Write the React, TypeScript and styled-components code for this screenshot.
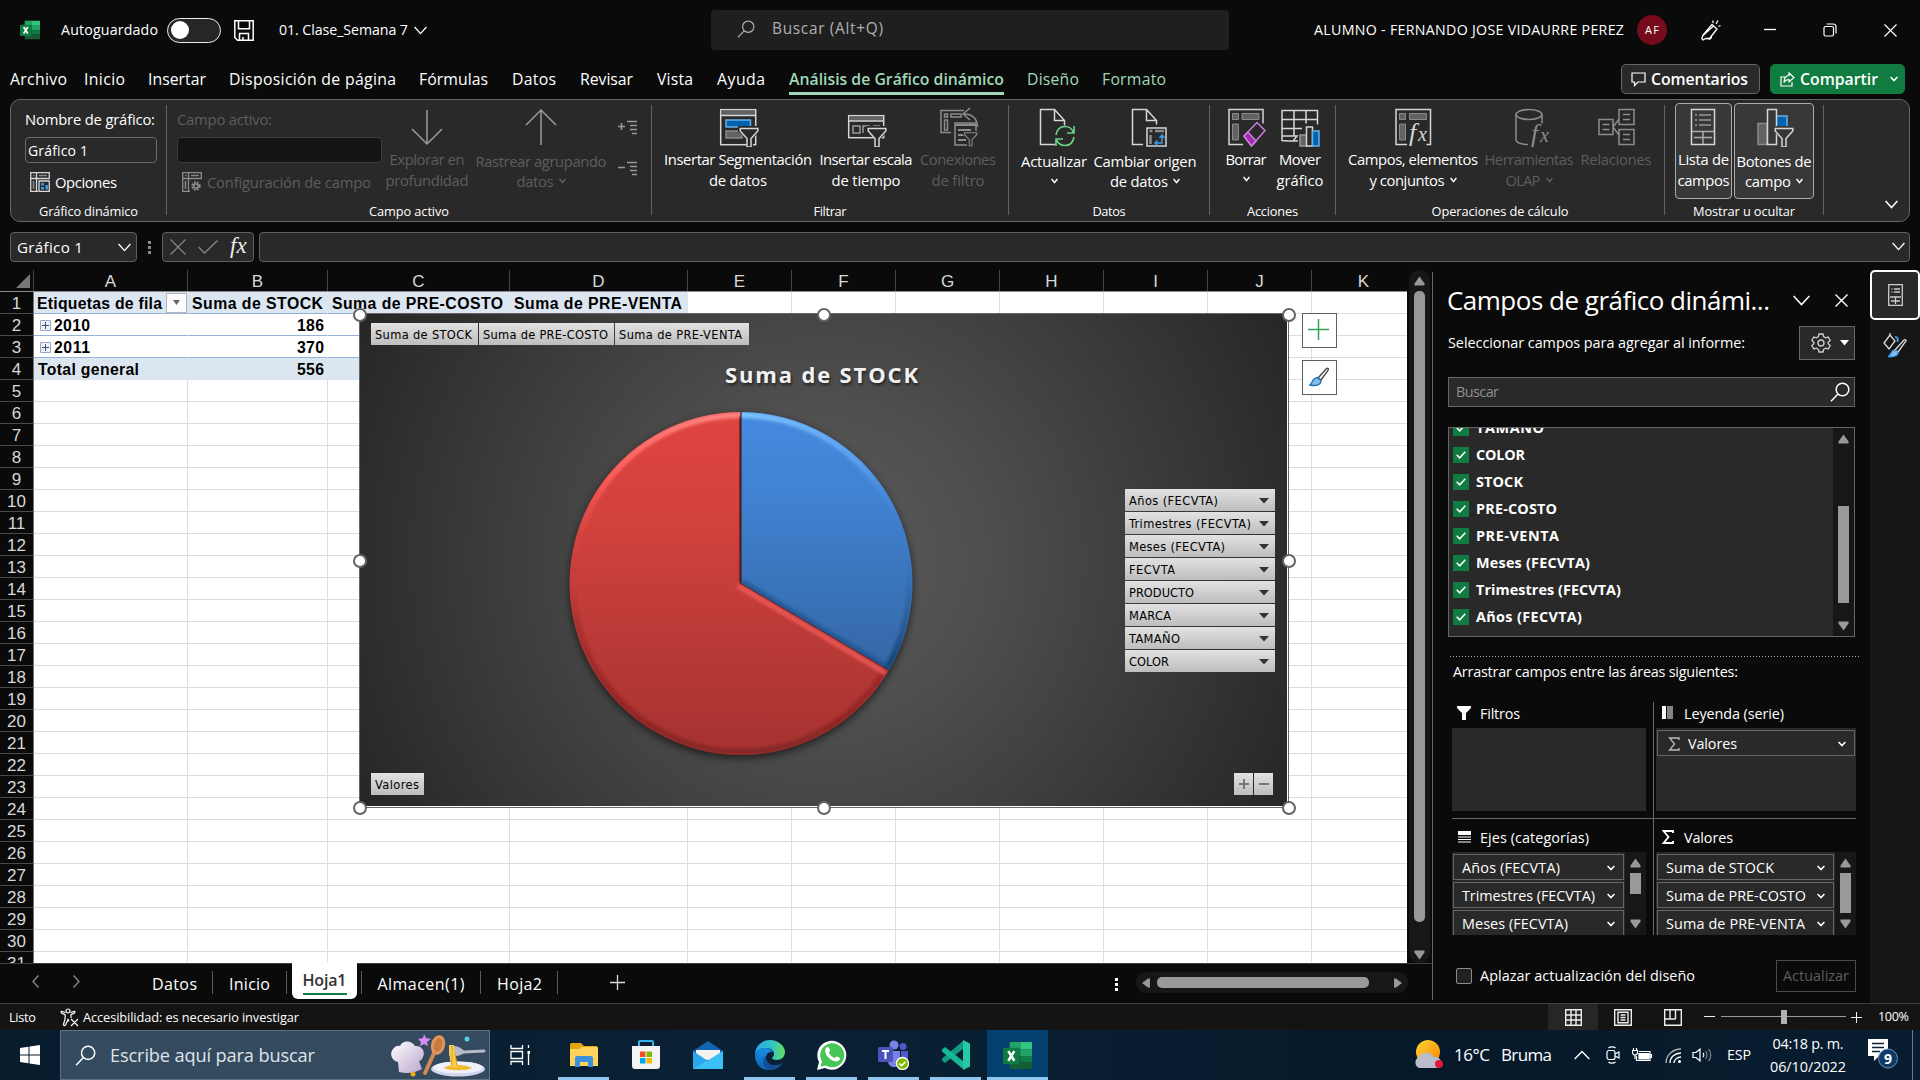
import React, { useLayoutEffect, useRef } from "react";
import styled, { createGlobalStyle, css } from "styled-components";

const UI = `"Open Sans", "Noto Sans", sans-serif`;
const ARIAL = `"Liberation Sans", Arial, sans-serif`;
const TAHOMA = `"DejaVu Sans Condensed", "DejaVu Sans", sans-serif`;

const GlobalStyle = createGlobalStyle`
  * { box-sizing: border-box; }
  html, body { margin: 0; padding: 0; background: #0a0a0a; overflow: hidden; }
  body { font-family: ${UI}; color: #fff; }
  svg { display: block; flex: none; }
`;

/* ---------- text ---------- */

const TextBox = styled.span<{ $w: number; $s: number; $c: string; $b: number; $f: string; $ml: number }>`
  display: block;
  flex: none;
  width: ${(p) => p.$w}px;
  margin-left: ${(p) => p.$ml}px;
  font-family: ${(p) => p.$f};
  font-size: ${(p) => p.$s}px;
  font-weight: ${(p) => p.$b};
  line-height: 20px;
  color: ${(p) => p.$c};
  white-space: nowrap;
`;

type TextProps = { w: number; s?: number; c?: string; b?: number; f?: string; ml?: number; children: string; className?: string };

/* A label whose tracking is adjusted so that the text fills its width. */
function T({ w, s = 15, c = "#fff", b = 400, f = UI, ml = 0, children, className }: TextProps) {
  const ref = useRef<HTMLSpanElement>(null);
  useLayoutEffect(() => {
    const el = ref.current;
    if (!el) return;
    el.style.letterSpacing = "0px";
    const natural = el.getBoundingClientRect().width;
    el.style.letterSpacing = `${(w - natural) / Math.max(1, children.length - 1)}px`;
  }, [w, children]);
  return (
    <TextBox className={className} $w={w} $s={s} $c={c} $b={b} $f={f} $ml={ml}>
      <span ref={ref}>{children}</span>
    </TextBox>
  );
}

const ChevWrap = styled.svg<{ $ml?: number }>`
  margin-left: ${(p) => p.$ml ?? 0}px;
`;

function Chev({ w = 8, h = 4, c = "#fff", sw = 1.5, ml }: { w?: number; h?: number; c?: string; sw?: number; ml?: number }) {
  return (
    <ChevWrap $ml={ml} width={w} height={h + 2} viewBox={`0 0 ${w} ${h + 2}`} fill="none" stroke={c} strokeWidth={sw}>
      <path d={`M0.6 1 L${w / 2} ${h + 0.6} L${w - 0.6} 1`} />
    </ChevWrap>
  );
}

/* ---------- frame ---------- */

const Screen = styled.div`
  width: 1920px;
  height: 1080px;
  display: flex;
  flex-direction: column;
  background: #0a0a0a;
  overflow: hidden;
`;

/* ---------- title bar ---------- */

const TitleBar = styled.div`
  height: 60px;
  display: flex;
  align-items: center;
  padding-left: 20px;
`;

const Toggle = styled.div`
  width: 54px;
  height: 25px;
  margin-left: 9px;
  border: 1.5px solid #eee;
  border-radius: 13px;
  background: #262626;
  display: flex;
  align-items: center;
  padding-left: 3px;
`;
const Knob = styled.div`
  width: 18px;
  height: 18px;
  border-radius: 50%;
  background: #fff;
`;
const Spaced = styled.div<{ $ml: number; $mt?: number }>`
  margin-left: ${(p) => p.$ml}px;
  margin-top: ${(p) => p.$mt ?? 0}px;
  flex: none;
`;
const TitleSearch = styled.div`
  width: 518px;
  height: 40px;
  margin-left: 284px;
  border-radius: 4px;
  background: #1f1f1f;
  display: flex;
  align-items: center;
  padding: 0 0 2px 26px;
`;
const Avatar = styled.div`
  width: 30px;
  height: 30px;
  margin-left: 13px;
  border-radius: 50%;
  background: #750b1c;
  display: flex;
  align-items: center;
  justify-content: center;
`;

const ExcelLogo = ({ s }: { s: number }) => (
  <svg width={s} height={s} viewBox="0 0 30 30">
    <path d="M7 1h11v7.500H7z" fill="#21a366" />
    <path d="M18 1h11a1 1 0 0 1 1 1v6.500H18z" fill="#33c481" />
    <path d="M7 8.500h11v7H7z" fill="#107c41" />
    <path d="M18 8.500h12v7H18z" fill="#21a366" />
    <path d="M7 15.500h11v6.500H7z" fill="#185c37" />
    <path d="M18 15.500h12v6.500H18z" fill="#107c41" />
    <path d="M7 22h23v6a1 1 0 0 1-1 1H8a1 1 0 0 1-1-1z" fill="#185c37" />
    <rect x="0" y="7" width="17" height="17" rx="1.500" fill="#107c41" />
    <path d="M5.500 10.500l6.200 9.900M11.700 10.500l-6.200 9.900" stroke="#fff" strokeWidth="2.600" />
  </svg>
);

const Magnifier = ({ s, c, sw = 1.3 }: { s: number; c: string; sw?: number }) => (
  <svg width={s} height={s} viewBox="0 0 20 20" fill="none" stroke={c} strokeWidth={sw}>
    <circle cx="12.500" cy="7.500" r="6.300" />
    <path d="M8 12L1 19.300" />
  </svg>
);

function Title() {
  return (
    <TitleBar>
      <ExcelLogo s={20} />
      <T w={97} ml={21} s={14.2}>Autoguardado</T>
      <Toggle><Knob /></Toggle>
      <Spaced $ml={13}>
        <svg width="20" height="21" viewBox="0 0 20 21" fill="none" stroke="#fff" strokeWidth="1.500">
          <path d="M.8.8h18.400v19.400H3.500L.8 17.500zM4.500.8v8h11v-8M5.500 20v-6.500h9V20M9 20v-3" />
        </svg>
      </Spaced>
      <T w={129} ml={25} s={14.200}>01. Clase_Semana 7</T>
      <Chev w={13} h={7} ml={6} sw={1.3} />
      <TitleSearch>
        <Magnifier s={18} c="#b5b5b5" />
        <T w={111} ml={17} s={15.400} c="#b0b0b0">Buscar (Alt+Q)</T>
      </TitleSearch>
      <T w={310} ml={85} s={14.200}>ALUMNO - FERNANDO JOSE VIDAURRE PEREZ</T>
      <Avatar><T w={14} s={11}>AF</T></Avatar>
      <Spaced $ml={34}>
        <svg width="20" height="22" viewBox="0 0 20 22" fill="none" stroke="#fff" strokeWidth="1.300">
          <path d="M11 5.500l5 4.500-7.500 9.500-3.500 0-3 1.500-1.200-1.500 1.200-3.500zM12.500 7L2 16.500M6.500 19.500a2.500 2.500 0 0 0 4-2.500M12 4V1.500M15 5l2-3.500M17.500 7.500l2-1" />
        </svg>
      </Spaced>
      <Spaced $ml={43}><svg width="12" height="12"><path d="M0 5.500h12" stroke="#fff" strokeWidth="1.300" /></svg></Spaced>
      <Spaced $ml={47}>
        <svg width="14" height="14" viewBox="0 0 14 14" fill="none" stroke="#fff" strokeWidth="1.200">
          <rect x="1" y="3.500" width="9.500" height="9.500" rx="1.500" />
          <path d="M3.500 1h6.500a3 3 0 0 1 3 3v6.500" />
        </svg>
      </Spaced>
      <Spaced $ml={47}>
        <svg width="13" height="13" viewBox="0 0 13 13" stroke="#fff" strokeWidth="1.200"><path d="M.5.5l12 12M12.500.5l-12 12" /></svg>
      </Spaced>
    </TitleBar>
  );
}

/* ---------- ribbon tabs ---------- */

const TabBar = styled.div`
  height: 39px;
  display: flex;
  padding: 4px 0 0 10px;
`;
const TabItem = styled.div<{ $ml: number; $active?: boolean }>`
  height: 31px;
  margin-left: ${(p) => p.$ml}px;
  padding-top: 5px;
  border-bottom: 3px solid ${(p) => (p.$active ? "#a0d8b9" : "transparent")};
`;
const ActionButton = styled.div<{ $w: number; $ml: number; $green?: boolean }>`
  width: ${(p) => p.$w}px;
  height: 30px;
  margin-left: ${(p) => p.$ml}px;
  border: 1px solid ${(p) => (p.$green ? "#107c41" : "#666")};
  background: ${(p) => (p.$green ? "#107c41" : "#292929")};
  border-radius: 5px;
  display: flex;
  align-items: center;
  padding-left: 9px;
`;

const tabs: { t: string; ml: number; w: number; c?: string; active?: boolean }[] = [
  { t: "Archivo", ml: 0, w: 57 },
  { t: "Inicio", ml: 17, w: 41 },
  { t: "Insertar", ml: 23, w: 58 },
  { t: "Disposición de página", ml: 23, w: 167 },
  { t: "Fórmulas", ml: 23, w: 69 },
  { t: "Datos", ml: 24, w: 44 },
  { t: "Revisar", ml: 24, w: 53 },
  { t: "Vista", ml: 24, w: 36 },
  { t: "Ayuda", ml: 24, w: 48 },
  { t: "Análisis de Gráfico dinámico", ml: 24, w: 215, c: "#a0d8b9", active: true },
  { t: "Diseño", ml: 23, w: 52, c: "#a0d8b9" },
  { t: "Formato", ml: 23, w: 64, c: "#a0d8b9" },
];

function Tabs() {
  return (
    <TabBar>
      {tabs.map((t) => (
        <TabItem key={t.t} $ml={t.ml} $active={t.active}>
          <T w={t.w} s={15.800} b={t.active ? 600 : 400} c={t.c}>{t.t}</T>
        </TabItem>
      ))}
      <ActionButton $w={139} $ml={455}>
        <svg width="15" height="15" viewBox="0 0 15 15" fill="none" stroke="#fff" strokeWidth="1.200"><path d="M1 1h13v9H7l-3.500 3.500V10H1z" /></svg>
        <T w={97} ml={5} s={15.800} b={600}>Comentarios</T>
      </ActionButton>
      <ActionButton $w={135} $ml={10} $green>
        <svg width="15" height="15" viewBox="0 0 15 15" fill="none" stroke="#fff" strokeWidth="1.200">
          <path d="M5 5H1v9h11v-4M9 1l5 4.500L9 10V7.500C6.500 7.500 5 8.500 4 10.500 4 6 6 3.500 9 3.500z" />
        </svg>
        <T w={78} ml={5} s={15.800} b={600}>Compartir</T>
        <Chev w={8} h={4} ml={12} />
      </ActionButton>
    </TabBar>
  );
}

/* ---------- ribbon ---------- */

const RibbonBox = styled.div`
  width: 1900px;
  height: 123px;
  margin-left: 10px;
  border: 1px solid #666;
  border-radius: 10px;
  background: #292929;
  display: flex;
  flex: none;
`;
const Group = styled.div<{ $w: number }>`
  width: ${(p) => p.$w - 1}px;
  display: flex;
  flex-direction: column;
  align-items: center;
`;
const GroupBody = styled.div<{ $pl: number }>`
  align-self: stretch;
  height: 101px;
  display: flex;
  padding-left: ${(p) => p.$pl}px;
`;
const Divider = styled.div`
  width: 1px;
  height: 110px;
  margin-top: 5px;
  background: #626262;
`;
const Stack = styled.div<{ $w: number }>`
  width: ${(p) => p.$w}px;
  flex: none;
  padding-top: 9px;
`;
const Field = styled.div<{ $off?: boolean }>`
  height: 26px;
  margin-top: 8px;
  border: 1px solid ${(p) => (p.$off ? "#3c3c3c" : "#6a6a6a")};
  border-radius: 4px;
  background: ${(p) => (p.$off ? "#141414" : "#292929")};
  padding: 3px 0 0 2px;
`;
const SmallButton = styled.div`
  display: flex;
  align-items: center;
  height: 22px;
  margin: 8px 0 0 5px;
`;
const BigButton = styled.div<{ $w: number; $ml: number; $on?: boolean }>`
  width: ${(p) => p.$w}px;
  height: 96px;
  margin: 3px 0 0 ${(p) => p.$ml}px;
  flex: none;
  display: flex;
  flex-direction: column;
  align-items: center;
  border: 1px solid transparent;
  ${(p) => p.$on && css`
    border-color: #ababab;
    border-radius: 4px;
    background: #383838;
  `}
`;
const IconSlot = styled.div<{ $dx: number }>`
  height: 40px;
  margin-top: 3px;
  padding-left: ${(p) => Math.max(0, p.$dx * 2)}px;
  padding-right: ${(p) => Math.max(0, -p.$dx * 2)}px;
  display: flex;
`;
const Line = styled.div<{ $mt?: number }>`
  height: 20px;
  margin-top: ${(p) => p.$mt ?? 0}px;
  display: flex;
  align-items: center;
`;

const DIM = "#5e5e5e";

function Big({ w, ml, icon, a, b, drop = 0, off, on, dx = 0, chev }: {
  w: number; ml: number; icon: React.ReactNode; a: [string, number]; b?: [string, number];
  drop?: number; off?: boolean; on?: boolean; dx?: number; chev?: boolean;
}) {
  const c = off ? DIM : "#fff";
  return (
    <BigButton $w={w} $ml={ml} $on={on}>
      <IconSlot $dx={dx}>{icon}</IconSlot>
      <Line $mt={2 + drop}><T w={a[1]} s={14.800} c={c}>{a[0]}</T></Line>
      <Line $mt={drop || !b ? 0 : 1}>
        {b && <T w={b[1]} s={14.800} c={c}>{b[0]}</T>}
        {chev && <Chev w={7} h={4} c={c} ml={b ? 5 : 0} />}
      </Line>
    </BigButton>
  );
}

const Ico = ({ children, w = 40 }: { children: React.ReactNode; w?: number }) => (
  <svg width={w} height="40" viewBox={`0 0 ${w} 40`} fill="none" stroke="#d6d6d6" strokeWidth="1.500">{children}</svg>
);
const G = "#d6d6d6";
const M = "#626262";
const BG = "#292929";
const Funnel = ({ x, y, s = 1, c = G, bg = BG }: { x: number; y: number; s?: number; c?: string; bg?: string }) => (
  <g transform={`translate(${x} ${y}) scale(${s})`}>
    <path d="M-1.500-1.500h22v5l-7 7.500v11h-6.500v-11L-1.500 4z" fill={bg} stroke="none" />
    <path d="M.7 1h17.600v2.500L11.500 11v8.500h-4V11L.7 3.500z" fill={bg} stroke={c} />
  </g>
);

const icons = {
  down: <Ico><path d="M20 3v34M5 22l15 15 15-15" stroke="#9a9a9a" /></Ico>,
  up: <Ico><path d="M20 38V3M5 18L20 3l15 15" stroke="#9a9a9a" /></Ico>,
  slicer: (
    <Ico>
      <rect x="1.700" y="2.700" width="35" height="35" />
      <rect x="2.500" y="3.500" width="33.500" height="5" fill={M} stroke="none" />
      <path d="M2 8.500h35" />
      <rect x="7" y="13" width="24.500" height="7" fill="#0063b1" stroke="#69afe5" />
      <rect x="7" y="24" width="16" height="7" fill={M} stroke="#8a8a8a" />
      <Funnel x={20.500} y={20.500} />
    </Ico>
  ),
  timeline: (
    <Ico>
      <rect x="1.700" y="8.700" width="35" height="22" />
      <rect x="2.500" y="9.500" width="33.500" height="4" fill={M} stroke="none" />
      <path d="M2 14h35" />
      <path d="M6 19h7v7H6zM16 26v-7h7M26 19h7" stroke="#999" />
      <Funnel x={20.500} y={20.500} />
    </Ico>
  ),
  connections: (
    <Ico>
      <g stroke="#8c8c8c">
        <path d="M25 3.500H2v22h10M5.500 7h3v3h-3zM12 7h10v3H12zM5.500 13h3v10h-3z" />
        <path d="M31 1l-7 6 7 6M25 7c9 0 13 4 13.500 13" />
        <path d="M37 24v-8H16v22h12" /><path d="M16 18h21M19 23h13M19 28h9M19 33h8" strokeWidth="2" />
        <Funnel x={25} y={25} s={0.700} c="#8c8c8c" />
      </g>
    </Ico>
  ),
  refresh: (
    <Ico>
      <path d="M17 37.500H2.500V2.500h14l10 11v5M16.500 2.500v11h10" />
      <g stroke="#6ad082"><path d="M18 28c1-6 5-8.500 9-8.500 4 0 7 2 8.500 6M36 19v7h-7M36 30c-1 6-5 8.500-9 8.500-4 0-7-2-8.500-6M18 39v-7h7" strokeWidth="1.700" /></g>
    </Ico>
  ),
  source: (
    <Ico>
      <path d="M13 37.500H2.500V2.500h14l10 11v4M16.500 2.500v11h10" />
      <rect x="17" y="21" width="19" height="18" fill={BG} />
      <path d="M19.500 24h3M25 24h9M20.500 28v9" stroke="#8a8a8a" strokeWidth="2.500" />
      <path d="M25 36h7v-7M29.500 31l2.500-3 2.500 3M27.500 33.500L25 36l2.500 2.500" stroke="#3b9be6" />
    </Ico>
  ),
  clear: (
    <Ico>
      <path d="M16 37.500H2V2.500h34v14" />
      <path d="M5.500 6.500h6v6h-6zM15 6.500h17v6H15zM5.500 17h6v16h-6z" fill={M} stroke="#8a8a8a" strokeWidth="1" />
      <path d="M17 29l13-13.500 8 8L24.500 39z" fill={BG} stroke="#cf7fdc" />
      <path d="M17 29l4-4 8 9-4.500 5z" fill="#9b2fae" stroke="#cf7fdc" />
    </Ico>
  ),
  move: (
    <Ico>
      <path d="M17 34H8l-7-.500V3.500h35.500v14M1 12.500h35.500M1 21.500h20M13 3.500V29M25 3.500v13M1 29h15l-4 5" />
      <path d="M19 28h7v11h-7z" fill={M} stroke="#999" />
      <path d="M25.500 20h6v19h-6z" fill={BG} />
      <path d="M31.500 24h6.500v15h-6.500z" fill="#0063b1" stroke="#69afe5" />
    </Ico>
  ),
  fields: (
    <Ico>
      <path d="M13 37.500H2V2.500h34.500v35h-4" />
      <path d="M5.500 6.500h6v6h-6zM15.500 6.500h17v6h-17zM5.500 17h6v16h-6z" fill={M} stroke="#8a8a8a" strokeWidth="1" />
      <text x="15" y="34" fontFamily="Liberation Serif" fontStyle="italic" fontSize="26" fill={G} stroke="none">f</text>
      <text x="24" y="34" fontFamily="Liberation Serif" fontStyle="italic" fontSize="20" fill={G} stroke="none">x</text>
    </Ico>
  ),
  olap: (
    <Ico>
      <g stroke="#8c8c8c"><ellipse cx="15" cy="7.500" rx="13" ry="5" /><path d="M2 7.500v25c0 3 5 5 12 5M28 7.500v9" /></g>
      <text x="17" y="35" fontFamily="Liberation Serif" fontStyle="italic" fontSize="26" fill="#8c8c8c" stroke="none">f</text>
      <text x="26" y="35" fontFamily="Liberation Serif" fontStyle="italic" fontSize="20" fill="#8c8c8c" stroke="none">x</text>
    </Ico>
  ),
  relations: (
    <Ico>
      <g stroke="#8c8c8c"><path d="M2 12.500h14v15H2zM22 2.500h15v15H22zM22 22.500h15v15H22zM16 20l6-8M16 20l6 8" /><path d="M5.500 17.500h7M5.500 22.500h7M26 7.500h7M26 12.500h7M26 27.500h7M26 32.500h7" /></g>
    </Ico>
  ),
  list: (
    <Ico w={26}>
      <rect x="1.500" y="2.500" width="23" height="35" />
      <path d="M5 8h2M9 8h12M5 13h2M9 13h12M5 18h2M9 18h12" stroke="#999" />
      <path d="M2 24.500h22M4 30.500h18M13 25v12" stroke="#aaa" />
    </Ico>
  ),
  buttons: (
    <Ico>
      <path d="M2 16.500h9v21H2z" fill={M} stroke="#8a8a8a" />
      <path d="M20 9h11v12H20z" fill="#0063b1" stroke="#69afe5" />
      <path d="M11.500 2.500h9v35h-9z" fill="#383838" />
      <Funnel x={18.500} y={20.500} bg="#383838" />
    </Ico>
  ),
};

const PivotIcon = ({ off }: { off?: boolean }) => (
  <svg width="20" height="20" viewBox="0 0 20 20" fill="none" stroke={off ? "#8c8c8c" : G} strokeWidth="1.300">
    <path d="M8 19.300H.7V.7h18.600V7M.7 6.500h18.600M6.500.7v18.600" />
    <path d="M3 3.500h1.500M9 3.500h8M3.500 9v8" stroke="#888" strokeWidth="1.600" />
    {off ? (
      <><circle cx="14" cy="14" r="3.500" strokeWidth="2.400" strokeDasharray="1.800 1" /><circle cx="14" cy="14" r="2" /></>
    ) : (
      <><path d="M9 9h10.300v10.300H9z" fill={BG} /><path d="M11 11h3v2.500h-3zM15.500 13h2.500v4.500h-2.500zM11 15h3v2.500h-3z" fill="#3b9be6" stroke="none" /></>
    )}
  </svg>
);

const IndentIcon = ({ plus }: { plus?: boolean }) => (
  <svg width="20" height="16" viewBox="0 0 20 16" stroke="#9a9a9a" strokeWidth="1.500">
    <path d={`M0 6.500h7M9 1.500h10M12 5.500h7M12 9.500h7M14 13.500h5${plus ? "M3.500 3v7" : ""}`} />
  </svg>
);

const IndentCol = styled.div`
  display: flex;
  flex-direction: column;
  gap: 25px;
  padding: 20px 0 0 9px;
`;
const RibbonEnd = styled.div`
  flex: 1;
  display: flex;
  align-items: flex-end;
  justify-content: flex-end;
  padding: 0 11px 12px 0;
`;

const GroupLabel = ({ t, w }: { t: string; w: number }) => <T w={w} s={12.800}>{t}</T>;

function Ribbon() {
  return (
    <RibbonBox>
      <Group $w={156}>
        <GroupBody $pl={14}>
          <Stack $w={132}>
            <T w={130} s={14.800}>Nombre de gráfico:</T>
            <Field><T w={60} s={14}>Gráfico 1</T></Field>
            <SmallButton><PivotIcon /><T w={62} ml={5} s={14.800}>Opciones</T></SmallButton>
          </Stack>
        </GroupBody>
        <GroupLabel t="Gráfico dinámico" w={99} />
      </Group>
      <Divider />
      <Group $w={485}>
        <GroupBody $pl={10}>
          <Stack $w={205}>
            <T w={95} s={14.800} c={DIM}>Campo activo:</T>
            <Field $off />
            <SmallButton><PivotIcon off /><T w={164} ml={5} s={14.800} c={DIM}>Configuración de campo</T></SmallButton>
          </Stack>
          <Big w={86} ml={2} icon={icons.down} a={["Explorar en", 75]} b={["profundidad", 83]} off />
          <Big w={136} ml={3} icon={icons.up} a={["Rastrear agrupando", 131]} b={["datos", 37]} chev off drop={2} />
          <IndentCol><IndentIcon plus /><IndentIcon /></IndentCol>
        </GroupBody>
        <GroupLabel t="Campo activo" w={80} />
      </Group>
      <Divider />
      <Group $w={357}>
        <GroupBody $pl={11}>
          <Big w={150} ml={0} icon={icons.slicer} a={["Insertar Segmentación", 148]} b={["de datos", 58]} dx={1} />
          <Big w={96} ml={5} icon={icons.timeline} a={["Insertar escala", 93]} b={["de tiempo", 69]} dx={1} />
          <Big w={78} ml={5} icon={icons.connections} a={["Conexiones", 76]} b={["de filtro", 53]} off dx={1} />
        </GroupBody>
        <GroupLabel t="Filtrar" w={33} />
      </Group>
      <Divider />
      <Group $w={201}>
        <GroupBody $pl={11}>
          <Big w={68} ml={0} icon={icons.refresh} a={["Actualizar", 66]} chev drop={2} dx={4} />
          <Big w={106} ml={4} icon={icons.source} a={["Cambiar origen", 103]} b={["de datos", 58]} chev drop={2} dx={5} />
        </GroupBody>
        <GroupLabel t="Datos" w={33} />
      </Group>
      <Divider />
      <Group $w={126}>
        <GroupBody $pl={15}>
          <Big w={42} ml={0} icon={icons.clear} a={["Borrar", 41]} chev dx={1} />
          <Big w={50} ml={8} icon={icons.move} a={["Mover", 42]} b={["gráfico", 47]} dx={1} />
        </GroupBody>
        <GroupLabel t="Acciones" w={51} />
      </Group>
      <Divider />
      <Group $w={329}>
        <GroupBody $pl={11}>
          <Big w={132} ml={0} icon={icons.fields} a={["Campos, elementos", 130]} b={["y conjuntos", 75]} chev dx={1} />
          <Big w={92} ml={4} icon={icons.olap} a={["Herramientas", 89]} b={["OLAP", 35]} chev off dx={5} />
          <Big w={72} ml={5} icon={icons.relations} a={["Relaciones", 71]} off dx={1} />
        </GroupBody>
        <GroupLabel t="Operaciones de cálculo" w={137} />
      </Group>
      <Divider />
      <Group $w={159}>
        <GroupBody $pl={10}>
          <Big w={57} ml={0} icon={icons.list} a={["Lista de", 51]} b={["campos", 52]} on dx={-1} />
          <Big w={80} ml={2} icon={icons.buttons} a={["Botones de", 75]} b={["campo", 46]} chev on drop={2} dx={2} />
        </GroupBody>
        <GroupLabel t="Mostrar u ocultar" w={102} />
      </Group>
      <Divider />
      <RibbonEnd><Chev w={13} h={7} /></RibbonEnd>
    </RibbonBox>
  );
}

/* ---------- formula bar ---------- */

const FormulaRow = styled.div`
  height: 48px;
  flex: none;
  display: flex;
  padding: 10px 0 0 10px;
`;
const BarBox = styled.div<{ $w: number; $ml?: number; $pl?: number; $end?: boolean }>`
  width: ${(p) => p.$w}px;
  height: 30px;
  margin-left: ${(p) => p.$ml ?? 0}px;
  padding-left: ${(p) => p.$pl ?? 0}px;
  border: 1px solid #5f5f5f;
  border-radius: 4px;
  background: #292929;
  display: flex;
  align-items: center;
  ${(p) => p.$end && css`justify-content: flex-end; padding: 0 4px 2px 0;`}
`;
const Dots = styled.div<{ $ml: number; $c: string }>`
  margin-left: ${(p) => p.$ml}px;
  display: flex;
  flex-direction: column;
  justify-content: center;
  gap: 2px;
  height: 30px;
  &::before, &::after, span { content: ""; width: 3px; height: 3px; background: ${(p) => p.$c}; }
`;
const Fx = styled.span`
  font: italic 23px/24px "Liberation Serif", serif;
  color: #eee;
  margin: -3px 0 0 12px;
`;

function FormulaBar() {
  return (
    <FormulaRow>
      <BarBox $w={127} $pl={6}>
        <T w={66} s={15.200}>Gráfico 1</T>
        <Chev w={13} h={7} ml={35} sw={1.300} />
      </BarBox>
      <Dots $ml={11} $c="#8a8a8a"><span /></Dots>
      <BarBox $w={92} $ml={11} $pl={7}>
        <svg width="16" height="16" viewBox="0 0 16 16" stroke="#858585" strokeWidth="1.300"><path d="M.5.5l15 15M15.500.5l-15 15" /></svg>
        <Spaced $ml={12}><svg width="20" height="14" viewBox="0 0 20 14" fill="none" stroke="#858585" strokeWidth="1.300"><path d="M.5 7l6 6L19.500.5" /></svg></Spaced>
        <Fx>fx</Fx>
      </BarBox>
      <BarBox $w={1651} $ml={5} $end><Chev w={13} h={7} sw={1.300} /></BarBox>
    </FormulaRow>
  );
}

/* ---------- work area ---------- */

const Work = styled.div`
  height: 733px;
  flex: none;
  display: flex;
`;
const BookCol = styled.div`
  width: 1432px;
  display: flex;
  flex-direction: column;
`;
const SheetRow = styled.div`
  height: 693px;
  display: flex;
`;
const Sheet = styled.div`
  position: relative;
  width: 1407px;
  height: 693px;
  overflow: hidden;
  background: #fff;
`;
const HeadRow = styled.div`
  display: flex;
  height: 22px;
  background: #0a0a0a;
  border-bottom: 1px solid #8a8a8a;
`;
const ColHead = styled.div<{ $w: number }>`
  width: ${(p) => p.$w}px;
  flex: none;
  border-right: 1px solid #444;
  font: 17px/23px ${ARIAL};
  color: #d8d8d8;
  text-align: center;
`;
const Corner = styled.div`
  width: 34px;
  flex: none;
  border-right: 1px solid #444;
  display: flex;
  align-items: flex-end;
  justify-content: flex-end;
  padding: 0 3px 3px 0;
`;
const Row = styled.div`
  display: flex;
  height: 22px;
`;
const RowHead = styled.div`
  width: 34px;
  flex: none;
  background: #0a0a0a;
  border-right: 1px solid #777;
  border-bottom: 1px solid #4a4a4a;
  font: 17px/23px ${ARIAL};
  color: #d8d8d8;
  text-align: center;
`;
const Cell = styled.div<{ $w: number; $kind: "plain" | "head" | "pivot" | "total"; $right?: boolean }>`
  width: ${(p) => p.$w}px;
  flex: none;
  height: 22px;
  display: flex;
  align-items: center;
  border-right: 1px solid #dedede;
  border-bottom: 1px solid #dedede;
  padding-left: 3px;
  ${(p) => p.$right && css`justify-content: flex-end; padding: 0 3px 0 0;`}
  ${(p) => p.$kind !== "plain" && css`border-right-color: transparent; border-bottom-color: #95b3d7;`}
  ${(p) => (p.$kind === "head" || p.$kind === "total") && css`background: #dce6f1;`}
  ${(p) => (p.$kind === "total") && css`border-bottom-color: #dce6f1;`}
`;
const CellLabel = styled.div`
  margin-top: 2px;
  flex: none;
`;
const FilterButton = styled.div`
  width: 21px;
  height: 20px;
  margin-left: 4px;
  background: #fdfdfd;
  border: 1px solid #b4b4b4;
  display: flex;
  align-items: center;
  justify-content: center;
`;
const Expander = styled.div`
  width: 11px;
  height: 11px;
  margin: 2px 3px 0 3px;
  border: 1px solid #96a5c0;
  border-radius: 1px;
  background: #eef1f7;
  display: flex;
  align-items: center;
  justify-content: center;
`;

const cols: [string, number][] = [["A", 154], ["B", 140], ["C", 182], ["D", 178], ["E", 104], ["F", 104], ["G", 104], ["H", 104], ["I", 104], ["J", 104], ["K", 104]];

const CellText = ({ t, w, ml }: { t: string; w: number; ml?: number }) => (
  <CellLabel><T w={w} ml={ml} s={15.800} b={700} c="#000" f={ARIAL}>{t}</T></CellLabel>
);

function cellContent(r: number, c: number) {
  if (r === 0) {
    if (c === 0) return (
      <><CellText t="Etiquetas de fila" w={125} />
        <FilterButton><svg width="7" height="5"><path d="M0 0h7L3.500 5z" fill="#666" /></svg></FilterButton></>
    );
    if (c === 1) return <CellText t="Suma de STOCK" w={131} ml={1} />;
    if (c === 2) return <CellText t="Suma de PRE-COSTO" w={171} ml={1} />;
    if (c === 3) return <CellText t="Suma de PRE-VENTA" w={168} ml={1} />;
  }
  if (c === 0 && (r === 1 || r === 2)) return (
    <><Expander><svg width="7" height="7"><path d="M0 3.500h7M3.500 0v7" stroke="#3d4f78" /></svg></Expander>
      <CellText t={r === 1 ? "2010" : "2011"} w={36} /></>
  );
  if (c === 0 && r === 3) return <CellText t="Total general" w={101} ml={1} />;
  if (c === 1 && r > 0 && r < 4) return <CellText t={["186", "370", "556"][r - 1]} w={27} />;
  return null;
}

function kindOf(r: number, c: number) {
  if (c > 3 || r > 3) return "plain" as const;
  return r === 0 ? ("head" as const) : r === 3 ? ("total" as const) : ("pivot" as const);
}

/* ---------- chart ---------- */

const ChartFrame = styled.div`
  position: absolute;
  left: 359px;
  top: 43px;
  width: 930px;
  height: 495px;
  border: 1px solid #666;
  background: #fff;
`;
const ChartBody = styled.div`
  width: 927px;
  height: 492px;
  background: radial-gradient(circle farthest-corner at 50% 50%, #5b5b5b 0%, #4f4f4f 30%, #262626 100%);
  display: grid;
  grid-template-rows: 9px 22px 1fr 22px 11px;
`;
const PieSvg = styled.svg`
  position: absolute;
  left: 0;
  top: 0;
`;
const ButtonRow = styled.div`
  grid-row: 2;
  display: flex;
  gap: 1px;
  padding-left: 11px;
`;
const BottomRow = styled.div`
  grid-row: 4;
  display: flex;
  padding-left: 11px;
`;
const face = css`
  background: linear-gradient(#e2e2e2, #bdbdbd);
  height: 22px;
  display: flex;
  align-items: center;
`;
const ChartButton = styled.div<{ $w: number }>`
  ${face}
  width: ${(p) => p.$w}px;
  padding: 2px 0 0 4px;
  flex: none;
`;
const ZoomPair = styled.div`
  display: flex;
  gap: 1px;
  margin-left: 810px;
`;
const ZoomButton = styled.div`
  ${face}
  width: 19px;
  justify-content: center;
`;
const Middle = styled.div`
  grid-row: 3;
  display: grid;
  grid-template-columns: 1fr 162px;
`;
const TitleHolder = styled.div`
  padding: 19px 0 0 365px;
  position: relative;
  text-shadow: 1px 2px 3px rgba(0, 0, 0, 0.6);
`;
const FieldList = styled.div`
  padding-top: 144px;
  display: flex;
  flex-direction: column;
  gap: 1px;
`;
const FieldButton = styled.div`
  ${face}
  width: 150px;
  padding: 2px 6px 0 4px;
  justify-content: space-between;
`;
const Handle = styled.div<{ $x: number; $y: number }>`
  position: absolute;
  left: ${(p) => p.$x - 7}px;
  top: ${(p) => p.$y - 7}px;
  width: 14px;
  height: 14px;
  border: 2.500px solid #636363;
  border-radius: 50%;
  background: #fff;
`;
const SideButton = styled.div<{ $top: number }>`
  position: absolute;
  left: 1302px;
  top: ${(p) => p.$top}px;
  width: 35px;
  height: 35px;
  border: 1px solid #5f5f5f;
  background: #fff;
  display: flex;
  align-items: center;
  justify-content: center;
  padding: 0 2px 2px 0;
`;

const R = 171.500, CX = 381, CY = 269.500;
const ANG = (186 / 556) * Math.PI * 2;
const EX = CX + R * Math.sin(ANG), EY = CY - R * Math.cos(ANG);
const BLUE = `M${CX} ${CY}V${CY - R}A${R} ${R} 0 0 1 ${EX} ${EY}Z`;
const RED = `M${CX} ${CY}L${EX} ${EY}A${R} ${R} 0 1 1 ${CX} ${CY - R}Z`;

function Pie() {
  return (
    <PieSvg width="926" height="491" viewBox="0 0 926 491">
      <defs>
        <linearGradient id="pb" gradientUnits="userSpaceOnUse" x1="0" y1={CY - R} x2="0" y2={EY}>
          <stop offset="0" stopColor="#448adf" /><stop offset=".3" stopColor="#4183d3" /><stop offset="1" stopColor="#3467a5" />
        </linearGradient>
        <linearGradient id="pr" gradientUnits="userSpaceOnUse" x1="0" y1={CY - R} x2="0" y2={CY + R}>
          <stop offset="0" stopColor="#e04440" /><stop offset=".3" stopColor="#d3423e" /><stop offset="1" stopColor="#a43230" />
        </linearGradient>
        <linearGradient id="hb" gradientUnits="userSpaceOnUse" x1={CX} y1={CY - R} x2={CX + 120} y2={CY + 90}>
          <stop offset="0" stopColor="#7cc4ff" /><stop offset=".35" stopColor="#5c9ff0" stopOpacity=".9" /><stop offset=".6" stopColor="#4183d3" stopOpacity="0" /><stop offset="1" stopColor="#123c6c" stopOpacity=".8" />
        </linearGradient>
        <linearGradient id="hr" gradientUnits="userSpaceOnUse" x1="0" y1={CY - R} x2="0" y2={CY + R}>
          <stop offset="0" stopColor="#ff8582" /><stop offset=".2" stopColor="#ff5f5c" stopOpacity=".9" /><stop offset=".45" stopColor="#d04040" stopOpacity="0" /><stop offset=".6" stopColor="#801818" stopOpacity=".3" /><stop offset="1" stopColor="#701b1a" stopOpacity=".6" />
        </linearGradient>
        <clipPath id="cb"><path d={BLUE} /></clipPath>
        <clipPath id="cr"><path d={RED} /></clipPath>
        <filter id="b2" x="-20%" y="-20%" width="140%" height="140%"><feGaussianBlur stdDeviation="1.800" /></filter>
        <filter id="b4" x="-20%" y="-20%" width="140%" height="140%"><feGaussianBlur stdDeviation="4" /></filter>
      </defs>
      <circle cx={CX} cy={CY + 3} r={R} fill="#000" opacity=".6" filter="url(#b4)" />
      <path d={BLUE} fill="url(#pb)" />
      <path d={RED} fill="url(#pr)" />
      <g clipPath="url(#cb)">
        <circle cx={CX} cy={CY} r={R - 3} fill="none" stroke="url(#hb)" strokeWidth="6" filter="url(#b2)" />
        <path d={`M${CX} ${CY}L${EX} ${EY}`} stroke="#1f4f86" strokeWidth="9" opacity=".65" filter="url(#b2)" />
      </g>
      <g clipPath="url(#cr)">
        <circle cx={CX} cy={CY} r={R - 3} fill="none" stroke="url(#hr)" strokeWidth="6" filter="url(#b2)" />
        <path d={`M${CX - 4} ${CY + 2}L${EX - 3} ${EY + 3}`} stroke="#ee5b58" strokeWidth="5" opacity=".85" filter="url(#b2)" />
        <path d={`M${CX - 1} ${CY - R + 5}L${CX - 0.5} ${CY}`} stroke="#661b1a" strokeWidth="5" opacity=".9" filter="url(#b2)" />
      </g>
      <path d={`M${CX} ${CY - R}V${CY}`} stroke="#3a2024" strokeWidth="1.200" />
      <path d={`M${CX} ${CY}L${EX} ${EY}`} stroke="#5b2430" strokeWidth="1" />
    </PieSvg>
  );
}

const fieldButtons: [string, number][] = [
  ["Años (FECVTA)", 89], ["Trimestres (FECVTA)", 122], ["Meses (FECVTA)", 96], ["FECVTA", 46],
  ["PRODUCTO", 65], ["MARCA", 42], ["TAMAÑO", 51], ["COLOR", 40],
];

const Tiny = ({ t, w }: { t: string; w: number }) => <T w={w} s={12.700} c="#000" f={TAHOMA}>{t}</T>;

function Chart() {
  return (
    <ChartFrame>
      <ChartBody>
        <Pie />
        <ButtonRow>
          <ChartButton $w={107}><Tiny t="Suma de STOCK" w={97} /></ChartButton>
          <ChartButton $w={135}><Tiny t="Suma de PRE-COSTO" w={125} /></ChartButton>
          <ChartButton $w={134}><Tiny t="Suma de PRE-VENTA" w={123} /></ChartButton>
        </ButtonRow>
        <Middle>
          <TitleHolder><T w={193} s={22} b={700} c="#f2f2f2">Suma de STOCK</T></TitleHolder>
          <FieldList>
            {fieldButtons.map(([t, w]) => (
              <FieldButton key={t}>
                <Tiny t={t} w={w} />
                <svg width="10" height="6"><path d="M0 0h10L5 5.500z" fill="#333" /></svg>
              </FieldButton>
            ))}
          </FieldList>
        </Middle>
        <BottomRow>
          <ChartButton $w={53}><Tiny t="Valores" w={44} /></ChartButton>
          <ZoomPair>
            <ZoomButton><svg width="10" height="10"><path d="M0 5h10M5 0v10" stroke="#777" strokeWidth="2" /></svg></ZoomButton>
            <ZoomButton><svg width="10" height="10"><path d="M0 5h10" stroke="#777" strokeWidth="2" /></svg></ZoomButton>
          </ZoomPair>
        </BottomRow>
      </ChartBody>
    </ChartFrame>
  );
}

const Brush = ({ s }: { s: number }) => (
  <svg width={s} height={s} viewBox="0 0 20 20" fill="none" strokeWidth="1.300">
    <path d="M9 11L17.500 1.500c1-1 2.500.2 1.800 1.500L12 13z" stroke="#444" />
    <path d="M8.500 10.500l3.500 3c0 4-4 6-11.500 4.500C3.500 17 3 11 8.500 10.500z" fill="#83beec" stroke="#1f74bb" />
  </svg>
);

const handles: [number, number][] = [[360, 45], [824, 45], [1289, 45], [360, 291], [1289, 291], [360, 538], [824, 538], [1289, 538]];

/* ---------- scroll bars ---------- */

const VTrack = styled.div<{ $w: number; $round?: boolean; $p: string }>`
  width: ${(p) => p.$w}px;
  flex: none;
  align-self: stretch;
  background: #171717;
  border-radius: ${(p) => (p.$round ? 10 : 0)}px;
  display: flex;
  flex-direction: column;
  align-items: center;
  padding: ${(p) => p.$p};
`;
const VThumb = styled.div<{ $mt: number; $h: number; $round?: boolean }>`
  width: 11px;
  height: ${(p) => p.$h}px;
  margin-top: ${(p) => p.$mt}px;
  background: #999;
  border-radius: ${(p) => (p.$round ? 5 : 0)}px;
`;
const Push = styled.div`flex: 1;`;
const Tri = ({ d }: { d: "up" | "down" | "left" | "right" }) => (
  <svg width="11" height="10" viewBox="0 0 11 10">
    <path d={{ up: "M5.500.5l5 7v2H.5v-2z", down: "M5.500 9.500l5-7v-2H.5v2z", left: "M1 5l6-4.500h2v9H7z", right: "M10 5L4 .5H2v9h2z" }[d]} fill="#999" />
  </svg>
);

/* ---------- sheet tabs ---------- */

const SheetTabs = styled.div`
  height: 40px;
  border-top: 1px solid #3f3f3f;
  display: flex;
  align-items: flex-start;
`;
const SheetTab = styled.div<{ $w: number; $active?: boolean; $shift?: boolean }>`
  width: ${(p) => p.$w}px;
  flex: none;
  display: flex;
  justify-content: center;
  padding-top: 10px;
  padding-left: ${(p) => (p.$shift ? 1 : 0)}px;
  ${(p) => p.$active && css`
    height: 36px;
    margin: -1px 4px 0 5px;
    padding-top: 7px;
    background: #fff;
    border-radius: 0 0 6px 6px;
  `}
`;
const ActiveName = styled.div`
  height: 25px;
  border-bottom: 2px solid #107c41;
`;
const TabSep = styled.div`
  width: 1px;
  height: 23px;
  margin-top: 7px;
  background: #5c5c5c;
`;
const HTrack = styled.div`
  width: 272px;
  height: 21px;
  margin: 8px 0 0 18px;
  border-radius: 10px;
  background: #171717;
  display: flex;
  align-items: center;
  justify-content: space-between;
  padding: 0 5px;
`;
const HThumb = styled.div`
  width: 212px;
  height: 11px;
  margin-right: 18px;
  border-radius: 5px;
  background: #999;
`;

function Workbook() {
  return (
    <BookCol>
      <SheetRow>
        <Sheet>
          <HeadRow>
            <Corner><svg width="14" height="14"><path d="M14 0v14H0z" fill="#777" /></svg></Corner>
            {cols.map(([n, w]) => <ColHead key={n} $w={w}>{n}</ColHead>)}
          </HeadRow>
          {Array.from({ length: 31 }, (_, r) => (
            <Row key={r}>
              <RowHead>{r + 1}</RowHead>
              {cols.map(([n, w], c) => (
                <Cell key={n} $w={w} $kind={kindOf(r, c)} $right={c === 1 && r > 0}>{cellContent(r, c)}</Cell>
              ))}
            </Row>
          ))}
          <Chart />
          {handles.map(([x, y]) => <Handle key={`${x}-${y}`} $x={x} $y={y} />)}
          <SideButton $top={43}><svg width="21" height="21"><path d="M0 10.500h21M10.500 0v21" stroke="#37a35a" strokeWidth="1.500" /></svg></SideButton>
          <SideButton $top={90}><Brush s={20} /></SideButton>
        </Sheet>
        <Spaced $ml={2} />
        <VTrack $w={21} $round $p="6px 0 3px">
          <Tri d="up" />
          <VThumb $mt={5} $h={631} $round />
          <Push />
          <Tri d="down" />
        </VTrack>
      </SheetRow>
      <SheetTabs>
        <Spaced $ml={32} $mt={11}><svg width="7" height="13" fill="none" stroke="#8a8a8a" strokeWidth="1.300"><path d="M6.500.5L1 6.500l5.500 6" /></svg></Spaced>
        <Spaced $ml={34} $mt={11}><svg width="7" height="13" fill="none" stroke="#8a8a8a" strokeWidth="1.300"><path d="M.5.5L6 6.500l-5.500 6" /></svg></Spaced>
        <Spaced $ml={57} />
        <SheetTab $w={75}><T w={45} s={16}>Datos</T></SheetTab>
        <TabSep />
        <SheetTab $w={73}><T w={41} s={16}>Inicio</T></SheetTab>
        <TabSep />
        <SheetTab $w={65} $active><ActiveName><T w={44} s={16} b={600} c="#333">Hoja1</T></ActiveName></SheetTab>
        <TabSep />
        <SheetTab $w={118}><T w={87} s={16}>Almacen(1)</T></SheetTab>
        <TabSep />
        <SheetTab $w={76} $shift><T w={45} s={16}>Hoja2</T></SheetTab>
        <TabSep />
        <Spaced $ml={52} $mt={11}><svg width="15" height="15"><path d="M0 7.500h15M7.500 0v15" stroke="#ddd" strokeWidth="1.300" /></svg></Spaced>
        <Spaced $ml={476} />
        <Spaced $ml={14} $mt={5}><Dots $ml={0} $c="#fff"><span /></Dots></Spaced>
        <HTrack><Tri d="left" /><HThumb /><Tri d="right" /></HTrack>
      </SheetTabs>
    </BookCol>
  );
}

/* ---------- field pane ---------- */

const Pane = styled.div`
  width: 438px;
  height: 733px;
  padding-top: 2px;
  display: flex;
`;
const PaneEdge = styled.div`
  width: 1px;
  height: 728px;
  background: #666;
`;
const PaneInner = styled.div`
  width: 437px;
  padding: 8px 14px 0 15px;
`;
const PaneHead = styled.div`
  height: 40px;
  display: flex;
  align-items: center;
`;
const PaneSub = styled.div`
  height: 34px;
  margin-top: 6px;
  display: flex;
  align-items: center;
`;
const GearButton = styled.div`
  width: 56px;
  height: 34px;
  margin-left: 54px;
  border: 1px solid #666;
  background: #292929;
  display: flex;
  align-items: center;
  padding-left: 11px;
  gap: 9px;
`;
const PaneSearch = styled.div`
  width: 407px;
  height: 30px;
  margin-top: 17px;
  border: 1px solid #666;
  background: #292929;
  display: flex;
  align-items: center;
  justify-content: space-between;
  padding: 0 4px 1px 7px;
`;
const FieldBox = styled.div`
  width: 407px;
  height: 210px;
  margin-top: 20px;
  border: 1px solid #666;
  background: #292929;
  display: flex;
  overflow: hidden;
`;
const Fields = styled.div`
  flex: 1;
  height: 208px;
  overflow: hidden;
`;
const FieldLines = styled.div`
  margin-top: -14px;
`;
const FieldLine = styled.div`
  height: 27px;
  display: flex;
  align-items: center;
  padding-left: 4px;
`;
const Check = styled.div`
  width: 16px;
  height: 16px;
  margin-right: 7px;
  background: #107c41;
  display: flex;
  align-items: center;
  justify-content: center;
`;
const Dotted = styled.div`
  width: 409px;
  height: 1px;
  margin: 19px 0 5px 2px;
  background: repeating-linear-gradient(90deg, #aaa 0 1px, transparent 1px 3px);
`;
const Areas = styled.div`
  margin: 20px 0 0 4px;
  width: 404px;
  display: grid;
  grid-template-columns: 202px 202px;
  grid-template-rows: 117px 116px;
`;
const Area = styled.div<{ $l?: boolean; $t?: boolean }>`
  display: flex;
  flex-direction: column;
  ${(p) => (p.$l ? css`border-right: 1px solid #666; padding-right: 7px;` : css`padding-left: 2px;`)}
  ${(p) => p.$t && css`border-bottom: 1px solid #666;`}
`;
const AreaHead = styled.div<{ $mt: number; $mb: number; $ml: number }>`
  height: 20px;
  flex: none;
  margin: ${(p) => p.$mt}px 0 ${(p) => p.$mb}px ${(p) => p.$ml}px;
  display: flex;
  align-items: center;
`;
const GlyphSlot = styled.div`
  width: 22px;
  padding-bottom: 3px;
`;
const DropZone = styled.div`
  height: 83px;
  flex: none;
  background: #292929;
  display: flex;
  overflow: hidden;
`;
const Pills = styled.div`
  flex: 1;
  padding: 2px 1px 0;
  display: flex;
  flex-direction: column;
  gap: 2px;
`;
const Pill = styled.div<{ $pl: number }>`
  height: 26px;
  flex: none;
  border: 1px solid #666;
  background: #292929;
  display: flex;
  align-items: center;
  justify-content: space-between;
  padding: 1px 8px 0 ${(p) => p.$pl}px;
`;
const PillName = styled.div`
  display: flex;
  align-items: center;
  gap: 8px;
`;
const PaneFoot = styled.div`
  height: 32px;
  margin: 25px 0 0 8px;
  display: flex;
  align-items: center;
`;
const EmptyCheck = styled.div`
  width: 16px;
  height: 16px;
  border: 1px solid #8a8a8a;
  border-radius: 2px;
  background: #222;
`;
const UpdateButton = styled.div`
  width: 80px;
  height: 32px;
  margin-left: 81px;
  border: 1px solid #4a4a4a;
  display: flex;
  align-items: center;
  justify-content: center;
`;

const fields: [string, number][] = [
  ["TAMAÑO", 68], ["COLOR", 49], ["STOCK", 47], ["PRE-COSTO", 81], ["PRE-VENTA", 83],
  ["Meses (FECVTA)", 114], ["Trimestres (FECVTA)", 145], ["Años (FECVTA)", 106],
];

const P = (p: { t: string; w: number; ml?: number; c?: string; b?: number }) => <T w={p.w} ml={p.ml} c={p.c} b={p.b} s={14.400}>{p.t}</T>;

const Sigma = ({ c = "#fff", sw = 1.800 }: { c?: string; sw?: number }) => (
  <svg width="12" height="14" viewBox="0 0 12 14" fill="none" stroke={c} strokeWidth={sw}><path d="M11 3V1H1.500l5 6-5 6H11v-2" /></svg>
);

function PillList({ items }: { items: [string, number][] }) {
  return (
    <Pills>
      {items.map(([t, w]) => <Pill key={t} $pl={8}><P t={t} w={w} /><Chev w={8} h={4} /></Pill>)}
    </Pills>
  );
}

function FieldPane() {
  return (
    <Pane>
      <PaneEdge />
      <PaneInner>
        <PaneHead>
          <T w={323} ml={-1} s={26}>Campos de gráfico dinámi...</T>
          <Chev w={17} h={9} ml={23} />
          <Spaced $ml={25}><svg width="13" height="13"><path d="M.5.5l12 12M12.500.5l-12 12" stroke="#fff" strokeWidth="1.400" /></svg></Spaced>
        </PaneHead>
        <PaneSub>
          <P t="Seleccionar campos para agregar al informe:" w={297} />
          <GearButton>
            <svg width="20" height="20" viewBox="0 0 20 20" fill="none" stroke="#ccc" strokeWidth="1.400">
              <path d="M8 1h4l.6 2.600 2 1.200 2.600-.8 2 3.400L17.200 9.200v1.600l2 1.800-2 3.400-2.600-.8-2 1.200L12 19H8l-.6-2.600-2-1.200-2.600.8-2-3.400 2-1.800V9.200l-2-1.800 2-3.400 2.600.8 2-1.200z" />
              <circle cx="10" cy="10" r="3" />
            </svg>
            <svg width="9" height="6"><path d="M0 0h9L4.500 5.500z" fill="#fff" /></svg>
          </GearButton>
        </PaneSub>
        <PaneSearch><P t="Buscar" w={43} c="#8f8f8f" /><Magnifier s={20} c="#fff" sw={1.500} /></PaneSearch>
        <FieldBox>
          <Fields>
            <FieldLines>
              {fields.map(([t, w]) => (
                <FieldLine key={t}>
                  <Check><svg width="10" height="8" fill="none" stroke="#fff" strokeWidth="1.500"><path d="M.7 3.800l3 3L9.300.8" /></svg></Check>
                  <P t={t} w={w} b={700} />
                </FieldLine>
              ))}
            </FieldLines>
          </Fields>
          <VTrack $w={21} $p="6px 0 5px"><Tri d="up" /><VThumb $mt={62} $h={97} /><Push /><Tri d="down" /></VTrack>
        </FieldBox>
        <Dotted />
        <P t="Arrastrar campos entre las áreas siguientes:" w={285} ml={5} />
        <Areas>
          <Area $l $t>
            <AreaHead $mt={2} $mb={4} $ml={5}>
              <GlyphSlot><svg width="14" height="14"><path d="M0 0h14v2L9 7v7H5V7L0 2z" fill="#fff" /></svg></GlyphSlot>
              <P t="Filtros" w={40} ml={1} />
            </AreaHead>
            <DropZone />
          </Area>
          <Area $t>
            <AreaHead $mt={2} $mb={4} $ml={6}>
              <GlyphSlot><svg width="11" height="13"><path d="M0 0h4v13H0zM5.500 0h1v13h-1zM7.500 0h1v13h-1zM9.500 0h1v13h-1z" fill="#fff" /></svg></GlyphSlot>
              <P t="Leyenda (serie)" w={100} />
            </AreaHead>
            <DropZone>
              <Pills>
                <Pill $pl={10}><PillName><Sigma c="#bbb" sw={1.300} /><P t="Valores" w={49} /></PillName><Chev w={8} h={4} /></Pill>
              </Pills>
            </DropZone>
          </Area>
          <Area $l>
            <AreaHead $mt={9} $mb={4} $ml={6}>
              <GlyphSlot><svg width="13" height="12"><path d="M0 0h13v4H0zM0 5.500h13v1H0zM0 8h13v1H0zM0 10.500h13v1H0z" fill="#fff" /></svg></GlyphSlot>
              <P t="Ejes (categorías)" w={109} />
            </AreaHead>
            <DropZone>
              <PillList items={[["Años (FECVTA)", 98], ["Trimestres (FECVTA)", 133], ["Meses (FECVTA)", 106]]} />
              <VTrack $w={21} $p="6px 0"><Tri d="up" /><VThumb $mt={5} $h={21} /><Push /><Tri d="down" /></VTrack>
            </DropZone>
          </Area>
          <Area>
            <AreaHead $mt={9} $mb={4} $ml={6}>
              <GlyphSlot><Sigma /></GlyphSlot>
              <P t="Valores" w={49} />
            </AreaHead>
            <DropZone>
              <PillList items={[["Suma de STOCK", 108], ["Suma de PRE-COSTO", 140], ["Suma de PRE-VENTA", 139]]} />
              <VTrack $w={21} $p="6px 0"><Tri d="up" /><VThumb $mt={5} $h={40} /><Push /><Tri d="down" /></VTrack>
            </DropZone>
          </Area>
        </Areas>
        <PaneFoot>
          <EmptyCheck />
          <P t="Aplazar actualización del diseño" w={215} ml={8} />
          <UpdateButton><P t="Actualizar" w={66} c="#5e5e5e" /></UpdateButton>
        </PaneFoot>
      </PaneInner>
    </Pane>
  );
}

const Rail = styled.div`
  width: 50px;
  background: #161616;
  display: flex;
  flex-direction: column;
  align-items: center;
`;
const RailButton = styled.div<{ $on?: boolean }>`
  width: 50px;
  height: 50px;
  display: flex;
  align-items: center;
  justify-content: center;
  border: 2px solid ${(p) => (p.$on ? "#fff" : "transparent")};
  background: ${(p) => (p.$on ? "#292929" : "transparent")};
  border-radius: 5px;
`;

/* ---------- status bar ---------- */

const StatusBar = styled.div`
  height: 27px;
  flex: none;
  border-top: 1px solid #3f3f3f;
  background: #141414;
  display: flex;
  align-items: center;
  padding-left: 9px;
`;
const ViewButton = styled.div<{ $on?: boolean }>`
  width: 50px;
  height: 26px;
  display: flex;
  align-items: center;
  justify-content: center;
  background: ${(p) => (p.$on ? "#262626" : "transparent")};
`;
const ZoomLine = styled.div`
  width: 125px;
  height: 14px;
  margin: 0 5px 0 6px;
  background: linear-gradient(#999, #999) 0 6px / 100% 1px no-repeat;
  padding-left: 60px;
`;
const ZoomThumb = styled.div`
  width: 6px;
  height: 14px;
  background: #b0b0b0;
`;

function Status() {
  return (
    <StatusBar>
      <T w={27} s={12.800}>Listo</T>
      <Spaced $ml={24}>
        <svg width="19" height="19" viewBox="0 0 19 19" fill="none" stroke="#fff" strokeWidth="1.200">
          <circle cx="8" cy="3" r="2" />
          <path d="M5.500 4.500C3 4 1 2.500 1 4s3 2 4 2.500c1 3-.5 6-1.500 10 .5 2 2 1 2.500-.5l2-4.500 1 2M10.500 4.500C13 4 15 2.500 15 4s-3 2-4 2.500V10M11 11l7 7M18 11l-7 7" />
        </svg>
      </Spaced>
      <T w={216} ml={4} s={12.800}>Accesibilidad: es necesario investigar</T>
      <Spaced $ml={1249} />
      <ViewButton $on>
        <svg width="17" height="17" fill="none" stroke="#eee" strokeWidth="1.400"><path d="M.7.7h15.600v15.600H.7zM6 .7v15.600M11 .7v15.600M.7 6h15.600M.7 11h15.600" /></svg>
      </ViewButton>
      <ViewButton>
        <svg width="18" height="17" fill="none" stroke="#eee" strokeWidth="1.400"><path d="M.7.7h16.600v15.600H.7zM4 3.200h10v10.600H4zM6.500 6h5M6.500 8.500h5M6.500 11h5" /></svg>
      </ViewButton>
      <ViewButton>
        <svg width="18" height="17" fill="none" stroke="#eee" strokeWidth="1.400"><path d="M.7.7h16.600v15.600H.7zM6 .7V10M11.500.7V10M.7 10h11" /></svg>
      </ViewButton>
      <Spaced $ml={6}><svg width="11" height="12"><path d="M0 5.500h11" stroke="#eee" /></svg></Spaced>
      <ZoomLine><ZoomThumb /></ZoomLine>
      <svg width="11" height="11"><path d="M0 5.500h11M5.500 0v11" stroke="#eee" /></svg>
      <T w={31} ml={16} s={12.600}>100%</T>
    </StatusBar>
  );
}

/* ---------- taskbar ---------- */

const Taskbar = styled.div`
  height: 50px;
  flex: none;
  display: flex;
  align-items: center;
  background: linear-gradient(90deg, #071c2d 0%, #0a2135 40%, #06192a 75%, #081d30 100%);
`;
const TaskSearch = styled.div`
  width: 430px;
  height: 50px;
  margin-left: 20px;
  border: 1px solid #5f7182;
  background: #344a5f;
  display: flex;
  align-items: center;
  padding-left: 14px;
`;
const AppSlot = styled.div<{ $ml: number; $w?: number; $run?: boolean; $on?: boolean }>`
  width: ${(p) => p.$w ?? 51}px;
  height: 50px;
  margin-left: ${(p) => p.$ml}px;
  padding-top: 3px;
  display: flex;
  align-items: center;
  justify-content: center;
  border-bottom: 3px solid ${(p) => (p.$run ? "#8ec6f0" : "transparent")};
  background: ${(p) => (p.$on ? "#04406f" : "transparent")};
  background-clip: padding-box;
`;
const Clock = styled.div`
  width: 78px;
  margin-left: 18px;
  display: flex;
  flex-direction: column;
  align-items: center;
  gap: 3px;
`;
const EndLine = styled.div`
  width: 1px;
  height: 50px;
  margin-left: 13px;
  background: #6a7884;
`;

const CookingArt = () => (
  <svg width="96" height="44" viewBox="0 0 96 44">
    <defs>
      <linearGradient id="hat" x1="0" y1="0" x2="1" y2="1"><stop offset="0" stopColor="#fff" /><stop offset="1" stopColor="#b9a4cf" /></linearGradient>
    </defs>
    <path d="M8 39L7 29c-6-1-9-8-5-13 2-3 5-4 7-3 2-6 12-6 15 0 6-1 11 5 8 11-1 3-3 4-4 4l3 8c-7 4-15 5-23 3z" fill="url(#hat)" />
    <path d="M33 1l2 4 5 1-4 3 1 4-4-2-4 2 1-4-3-3 5-1z" fill="#d78bf5" />
    <path d="M44 18L34 40" stroke="#d08a55" strokeWidth="4" strokeLinecap="round" />
    <ellipse cx="47" cy="12" rx="7" ry="10" transform="rotate(14 47 12)" fill="#e0965c" />
    <ellipse cx="47" cy="12" rx="4" ry="7" transform="rotate(14 47 12)" fill="#c87a43" />
    <ellipse cx="67" cy="36" rx="27" ry="7.500" fill="#cfd5ea" /><ellipse cx="67" cy="34.500" rx="25" ry="6" fill="#eef0fa" />
    <path d="M53 35c4-4 22-4 28 0-6 3-22 3-28 0z" fill="#f2b92e" />
    <path d="M58 14c5-3 11 0 15 3.500l20-1c2 0 2 3 0 3l-20 1c-4 2-10 4-15 2z" fill="#b8b9c9" />
    <path d="M58 12h5c0 6 2 14 4 22h-7c-1-8-2-14-2-22z" fill="#f8cf4e" />
    <path d="M61 13v20M64 20l2 13" stroke="#dc9c1d" />
    <circle cx="76" cy="6" r="2.500" fill="#56cbe8" /><circle cx="22" cy="41" r="2.500" fill="#f4aa0b" />
  </svg>
);

function TaskbarRow() {
  return (
    <Taskbar>
      <Spaced $ml={20}><svg width="20" height="20"><path d="M0 3l8.500-1.200v7.700H0zM9.500 1.600L20 0v9.500H9.500zM0 10.500h8.500v7.700L0 17zM9.500 10.500H20V20L9.500 18.400z" fill="#fff" /></svg></Spaced>
      <TaskSearch>
        <Magnifier s={21} c="#fff" sw={1.400} />
        <T w={205} ml={14} s={18.200} c="#dfe4e9">Escribe aquí para buscar</T>
        <Spaced $ml={76}><CookingArt /></Spaced>
      </TaskSearch>
      <Spaced $ml={20}>
        <svg width="20" height="20" fill="none" stroke="#fff" strokeWidth="1.300"><path d="M1 0v3.500h11.500V0M1 6.500h11.500v7H1zM1 20v-3.500h11.500V20M18.500 0v3M18.500 9v11" /><path d="M17.500 6h2.500v3h-2.500z" fill="#fff" stroke="none" /></svg>
      </Spaced>
      <AppSlot $ml={28} $run>
        <svg width="28" height="24" viewBox="0 0 28 24"><path d="M0 2a2 2 0 0 1 2-2h9l3 3h12a2 2 0 0 1 2 2v18H0z" fill="#e8a40c" /><path d="M0 6h9l3-2h14a2 2 0 0 1 2 2v17H0z" fill="#ffd25c" /><path d="M5 24V15a2 2 0 0 1 2-2h14a2 2 0 0 1 2 2v9h-5v-5h-8v5z" fill="#3b91dc" /></svg>
      </AppSlot>
      <AppSlot $ml={11}>
        <svg width="30" height="30" viewBox="0 0 30 30"><path d="M8 7V2a1 1 0 0 1 1-1h12a1 1 0 0 1 1 1v5" fill="none" stroke="#2fb3f2" strokeWidth="2" /><path d="M1 6h28v20a3 3 0 0 1-3 3H4a3 3 0 0 1-3-3z" fill="#f4f4f4" /><path d="M9 11.500h5.500V17H9z" fill="#f25022" /><path d="M15.500 11.500H21V17h-5.500z" fill="#7fba00" /><path d="M9 18h5.500v5.500H9z" fill="#00a4ef" /><path d="M15.500 18H21v5.500h-5.500z" fill="#ffb900" /></svg>
      </AppSlot>
      <AppSlot $ml={11}>
        <svg width="30" height="28" viewBox="0 0 30 28"><path d="M0 10L15 0l15 10v4H0z" fill="#1263b4" /><path d="M3 9h24v10H3z" fill="#f3f3f3" /><path d="M0 10l15 10L30 10v18H0z" fill="#2aa7ee" /><path d="M30 10L0 28h30z" fill="#41cbf8" opacity=".7" /></svg>
      </AppSlot>
      <AppSlot $ml={11} $run>
        <svg width="30" height="30" viewBox="0 0 30 30">
          <defs>
            <linearGradient id="e1" x1="0" x2="1"><stop offset="0" stopColor="#23a8ee" /><stop offset=".6" stopColor="#36c6c0" /><stop offset="1" stopColor="#66e056" /></linearGradient>
            <linearGradient id="e2" x1="0" y1="0" x2="0" y2="1"><stop offset="0" stopColor="#1a8fe3" /><stop offset="1" stopColor="#0c63b8" /></linearGradient>
          </defs>
          <path d="M0 15C0 6 7 0 15 0s15 6 15 12c0 5-4 8-8 8-3 0-5-1-5-2s2-1 2-4c0-4-4-6-8-6C5 8 1 11 0 15z" fill="url(#e1)" />
          <path d="M0 15c1-5 5-7 10-7 4 0 7 2 8 4-3-1-7 1-7 6 0 7 6 10 12 9-9 7-23 2-23-12z" fill="url(#e2)" />
          <path d="M11 16c-1 6 5 10 10 9 3 0 5-1 7-3-3 6-9 9-14 8C8 28 6 20 11 16z" fill="#124f94" />
        </svg>
      </AppSlot>
      <AppSlot $ml={11} $run>
        <svg width="30" height="30" viewBox="0 0 30 30"><path d="M0 30l2-8A14.500 14.500 0 1 1 8 28z" fill="#fff" /><path d="M3.500 26.500L5 21.500a12 12 0 1 1 4 4z" fill="#45c655" /><path d="M9 8c2-2 3-1 4 2 .5 1-1 2-1 2.500 1 2.500 3 4.500 5.500 5.500.5 0 1.500-2 2.500-1.500 3 1 4 2 2 4-5 4-17-6-13-12.500z" fill="#fff" /></svg>
      </AppSlot>
      <AppSlot $ml={11} $run>
        <svg width="31" height="30" viewBox="0 0 31 30"><circle cx="16" cy="5" r="4.500" fill="#7b83eb" /><circle cx="25" cy="6.500" r="3.500" fill="#5059c9" /><path d="M10 11h12v10c0 8-12 8-12 0z" fill="#7b83eb" /><path d="M23 11h7v8c0 5-7 5-7 1z" fill="#5059c9" /><rect y="7" width="15" height="15" rx="1.500" fill="#4b53bc" /><path d="M4 11h7M7.500 11v8" stroke="#fff" strokeWidth="2" /><circle cx="24.500" cy="23.500" r="6" fill="#7fba00" stroke="#fff" strokeWidth="1.300" /><path d="M21.500 23.500l2 2.300 4-4" fill="none" stroke="#fff" strokeWidth="1.600" /></svg>
      </AppSlot>
      <AppSlot $ml={11} $run>
        <svg width="30" height="30" viewBox="0 0 30 30"><path d="M22 1v8L4 23l-3-2.500v-2z" fill="#109a80" /><path d="M22 29v-8L4 7 1 9.500v2z" fill="#16b898" /><path d="M22 0l7 3.500v23L22 30z" fill="#27c8a5" /></svg>
      </AppSlot>
      <AppSlot $ml={6} $w={61} $run $on><ExcelLogo s={29} /></AppSlot>
      <Spaced $ml={366}>
        <svg width="30" height="30" viewBox="0 0 30 30">
          <defs><linearGradient id="sun" x1="0" y1="0" x2="1" y2="1"><stop offset="0" stopColor="#ffd633" /><stop offset="1" stopColor="#f58500" /></linearGradient></defs>
          <circle cx="14" cy="12" r="12" fill="url(#sun)" /><path d="M5 28a6 6 0 0 1 0-11c2-5 12-6 15 0 6-1 9 5 6 9-1 2-3 2-5 2z" fill="#b7bec9" /><circle cx="25" cy="24" r="4" fill="#e3173e" />
        </svg>
      </Spaced>
      <T w={36} ml={10} s={17}>16°C</T>
      <T w={51} ml={11} s={17}>Bruma</T>
      <Spaced $ml={22}><svg width="16" height="10" fill="none" stroke="#fff" strokeWidth="1.400"><path d="M.7 9L8 1.500 15.300 9" /></svg></Spaced>
      <Spaced $ml={16}>
        <svg width="14" height="18" viewBox="0 0 14 18" fill="none" stroke="#fff" strokeWidth="1.200"><rect x="1" y="4.500" width="8" height="9" rx="2" /><path d="M9 8l4-2v6l-4-2M2.500 2C4 .5 8 .5 9.500 2M2.500 16c1.500 1.500 5.500 1.500 7 0" /></svg>
      </Spaced>
      <Spaced $ml={12}>
        <svg width="20" height="16" viewBox="0 0 20 16" fill="none" stroke="#fff" strokeWidth="1.200"><path d="M7 4.500h11v9H4.500V9" /><path d="M7 6.500h9.500v5.500H7z" fill="#fff" /><path d="M18 7.500h1.500v3H18zM.5 3.500h5v2a2.500 2.500 0 0 1-5 0zM1.500 1v2.500M4.500 1v2.500M3 8v4" /></svg>
      </Spaced>
      <Spaced $ml={13}>
        <svg width="17" height="17" viewBox="0 0 17 17" fill="none" stroke="#a9b3bc" strokeWidth="1.300"><path d="M1 16C1 8 8 2 16 2" /><path d="M5 16c0-6 5-10 11-10M9 16c0-3 3-6 7-6" stroke="#fff" /><circle cx="14.500" cy="14.500" r="1.500" fill="#fff" stroke="none" /></svg>
      </Spaced>
      <Spaced $ml={10}>
        <svg width="20" height="16" viewBox="0 0 20 16" fill="none" stroke="#fff" strokeWidth="1.200"><path d="M1 5.500h3L8 2v12l-4-3.500H1zM11 6c1 1 1 3 0 4" /><path d="M13.500 4c2 2 2 6 0 8M16.500 2c3 3 3 9 0 12" stroke="#788692" /></svg>
      </Spaced>
      <T w={24} ml={15} s={14.200}>ESP</T>
      <Clock><T w={71} s={14.400}>04:18 p. m.</T><T w={76} s={14.400}>06/10/2022</T></Clock>
      <Spaced $ml={21}>
        <svg width="31" height="32" viewBox="0 0 31 32">
          <path d="M0 0h20v17h-9l-5 5v-5H0z" fill="#fff" /><path d="M4 4.500h12M4 8.500h12M4 12.500h8" stroke="#0a2135" strokeWidth="1.400" />
          <circle cx="20" cy="19.500" r="9.500" fill="#0d3a66" stroke="#6e93b5" />
          <text x="20" y="24.500" textAnchor="middle" fontFamily="Open Sans" fontSize="14" fontWeight="700" fill="#fff">9</text>
        </svg>
      </Spaced>
      <EndLine />
    </Taskbar>
  );
}

export default function App() {
  return (
    <Screen>
      <GlobalStyle />
      <Title />
      <Tabs />
      <Ribbon />
      <FormulaBar />
      <Work>
        <Workbook />
        <FieldPane />
        <Rail>
          <RailButton $on>
            <svg width="15" height="22" fill="none" stroke="#ccc" strokeWidth="1.300"><path d="M.7.7h13.600v20.600H.7zM2 13h11M7.500 13v7M3 17h9M3.500 5h1M6 5h6M3.500 8h1M6 8h6" /></svg>
          </RailButton>
          <RailButton>
            <svg width="24" height="25" viewBox="0 0 24 25" fill="none" stroke="#ddd" strokeWidth="1.300">
              <path d="M7 2L1 10l5 6 6-8zM7 2V0" /><path d="M12 4c3 0 3 2 2.500 5" stroke="#3b9be6" strokeWidth="2" />
              <path d="M12 17L21 7c1-1 2.500 0 1.800 1.200L15 19z" /><path d="M11.500 17l3.500 2.500c0 3-4 5-10 4 3-1 3-6 6.500-6.500z" fill="#83beec" stroke="#3b9be6" />
            </svg>
          </RailButton>
        </Rail>
      </Work>
      <Status />
      <TaskbarRow />
    </Screen>
  );
}
